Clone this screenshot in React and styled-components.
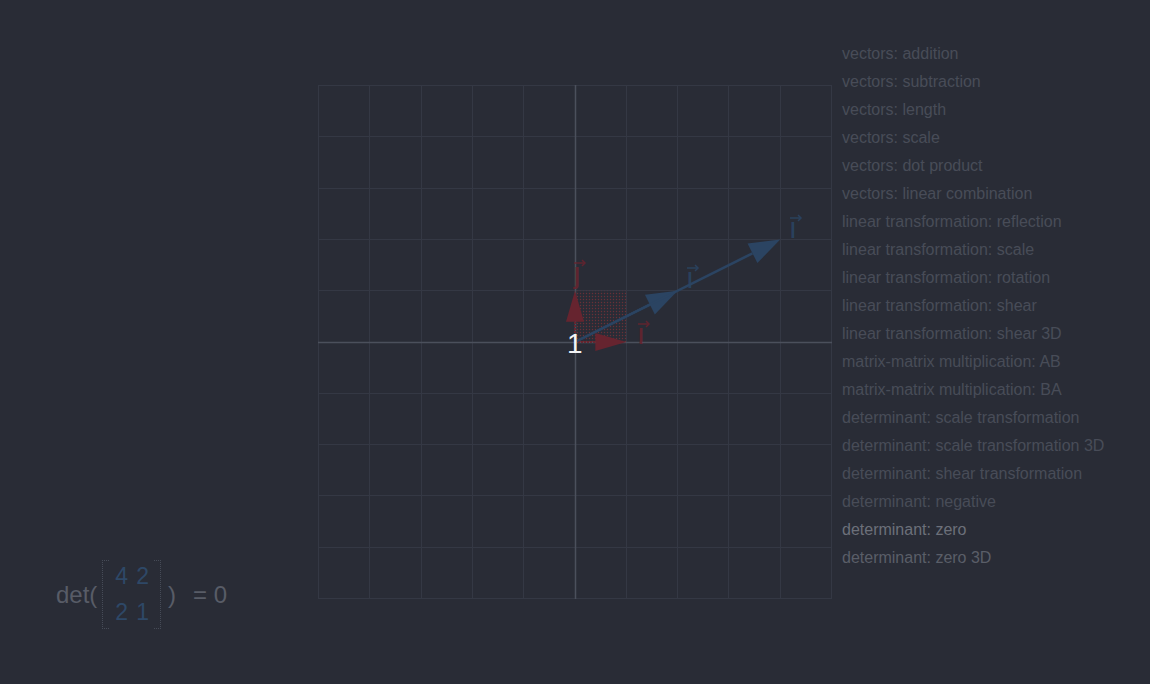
import styled, { createGlobalStyle } from 'styled-components';

const GlobalStyle = createGlobalStyle`
  html, body {
    margin: 0;
    padding: 0;
    background: #292c36;
  }
  body {
    font-family: 'Liberation Sans', Arial, sans-serif;
  }
`;

const Page = styled.div`
  display: flex;
  width: 1150px;
  height: 684px;
  background: #292c36;
  overflow: hidden;
`;

const LeftPanel = styled.div`
  width: 318px;
  display: flex;
  flex-direction: column;
  justify-content: flex-end;
  padding: 0 0 55px 56px;
  box-sizing: border-box;
`;

const Det = styled.div`
  display: flex;
  align-items: center;
  font-size: 24px;
  color: #585c67;
`;

const Matrix = styled.div`
  display: grid;
  grid-template-columns: auto auto;
  column-gap: 8px;
  row-gap: 8px;
  padding: 2px 12px 3px 13px;
  margin: 0 7px 0 5px;
  position: relative;
  font-size: 23px;
  color: #2e4867;
  line-height: 28px;
`;

const Bracket = styled.span`
  position: absolute;
  top: 0;
  bottom: 0;
  width: 6px;
  border: 1px dotted #464b57;
  ${p => (p.side === 'left' ? 'left: 0; border-right: none;' : 'right: 0; border-left: none;')}
`;

const Equals = styled.span`
  margin-left: 17px;
`;

const CanvasArea = styled.div`
  padding-top: 85px;
  width: 524px;
`;

const List = styled.ul`
  list-style: none;
  margin: 0;
  padding: 41px 0 0 0;
  display: flex;
  flex-direction: column;
`;

const Item = styled.li`
  height: 28px;
  line-height: 26px;
  font-size: 16px;
  color: ${p => (p.active ? '#6c707a' : p.hover ? '#5a5e68' : '#484c58')};
  white-space: nowrap;
`;

const items = [
  'vectors: addition',
  'vectors: subtraction',
  'vectors: length',
  'vectors: scale',
  'vectors: dot product',
  'vectors: linear combination',
  'linear transformation: reflection',
  'linear transformation: scale',
  'linear transformation: rotation',
  'linear transformation: shear',
  'linear transformation: shear 3D',
  'matrix-matrix multiplication: AB',
  'matrix-matrix multiplication: BA',
  'determinant: scale transformation',
  'determinant: scale transformation 3D',
  'determinant: shear transformation',
  'determinant: negative',
  'determinant: zero',
  'determinant: zero 3D',
];

const U = 51.3;
const O = 257;
const RED = '#66242f';
const BLUE = '#2b4462';

function Arrow({ x, y, color, width = 2, head = 30, half = 9, dash }) {
  const tx = O + x * U;
  const ty = O - y * U;
  const dx = tx - O;
  const dy = ty - O;
  const len = Math.hypot(dx, dy);
  const ux = dx / len;
  const uy = dy / len;
  const bx = tx - ux * head;
  const by = ty - uy * head;
  const px = -uy * half;
  const py = ux * half;
  return (
    <g>
      <line x1={O} y1={O} x2={bx} y2={by} stroke={color} strokeWidth={width} strokeDasharray={dash} />
      <polygon
        points={`${tx},${ty} ${bx + px},${by + py} ${bx - px},${by - py}`}
        fill={color}
      />
    </g>
  );
}

// vector label: a letter with a small arrow drawn over it
function VecLabel({ x, top, letter, color }) {
  return (
    <g opacity="0.9">
      <line x1={x - 3} y1={top} x2={x + 8} y2={top} stroke={color} strokeWidth="1.5" />
      <polyline points={`${x + 5},${top - 3} ${x + 8},${top} ${x + 5},${top + 3}`} fill="none" stroke={color} strokeWidth="1.5" />
      <text x={x} y={top + 20} fill={color} fontSize="30" textAnchor="middle" fontFamily="'Liberation Sans', sans-serif">
        {letter}
      </text>
    </g>
  );
}

function Plane() {
  const lines = [];
  for (let k = 0; k <= 10; k++) {
    const p = 0.5 + Math.round(k * U);
    lines.push(<line key={`v${k}`} x1={p} y1={0} x2={p} y2={514} stroke="#343844" strokeWidth="1" />);
    lines.push(<line key={`h${k}`} x1={0} y1={p} x2={514} y2={p} stroke="#343844" strokeWidth="1" />);
  }
  return (
    <svg width="514" height="514" viewBox="0 0 514 514">
      <defs>
        <pattern id="dots" width="3" height="3" patternUnits="userSpaceOnUse">
          <circle cx="1.5" cy="1.5" r="0.7" fill="#6a3036" />
        </pattern>
      </defs>
      {lines}
      <line x1={0} y1={O + 0.5} x2={514} y2={O + 0.5} stroke="#4b505c" strokeWidth="1.5" />
      <line x1={O + 0.5} y1={0} x2={O + 0.5} y2={514} stroke="#4b505c" strokeWidth="1.5" />
      <rect x={O} y={O - U} width={U} height={U} fill="url(#dots)" />
      <Arrow x={0} y={1} color={RED} width={2} head={31} half={9} dash="2 1" />
      <Arrow x={1} y={0} color={RED} width={2} head={31} half={9} dash="2 1" />
      <Arrow x={2} y={1} color={BLUE} width={2.5} head={31} half={11} />
      <Arrow x={4} y={2} color={BLUE} width={2.5} head={31} half={11} />
      <VecLabel x={259} top={178} letter="ȷ" color={RED} />
      <VecLabel x={323} top={239} letter="ı" color={RED} />
      <VecLabel x={372} top={183} letter="ı" color={BLUE} />
      <VecLabel x={475} top={133} letter="ı" color={BLUE} />
      <text x={249} y={268} fill="#f2f3f5" fontSize="28" fontFamily="'Liberation Sans', sans-serif">1</text>
    </svg>
  );
}

export default function App() {
  return (
    <>
      <GlobalStyle />
      <Page>
        <LeftPanel>
          <Det>
            <span>det(</span>
            <Matrix>
              <Bracket side="left" />
              <span>4</span>
              <span>2</span>
              <span>2</span>
              <span>1</span>
              <Bracket side="right" />
            </Matrix>
            <span>)</span>
            <Equals>= 0</Equals>
          </Det>
        </LeftPanel>
        <CanvasArea>
          <Plane />
        </CanvasArea>
        <List>
          {items.map((t, i) => (
            <Item key={t} active={i === 17} hover={i === 18}>
              {t}
            </Item>
          ))}
        </List>
      </Page>
    </>
  );
}
